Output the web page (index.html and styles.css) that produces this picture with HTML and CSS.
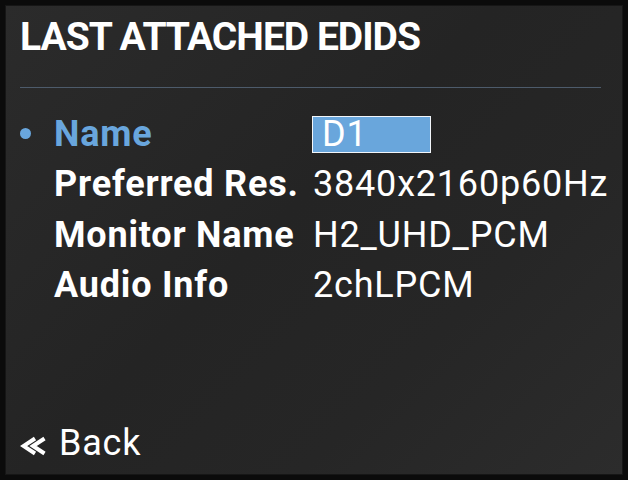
FILE: index.html
```html
<!DOCTYPE html>
<html>
<head>
<meta charset="utf-8">
<link rel="stylesheet" href="styles.css">
</head>
<body>
<div class="screen">
  <h1 class="title">LAST ATTACHED EDIDS</h1>
  <div class="rule"></div>
  <div class="rows">
    <div class="row active">
      <span class="bullet"></span>
      <span class="label">Name</span>
      <span class="value"><span class="field">D1</span></span>
    </div>
    <div class="row">
      <span class="bullet"></span>
      <span class="label">Preferred Res.</span>
      <span class="value">3840x2160p60Hz</span>
    </div>
    <div class="row">
      <span class="bullet"></span>
      <span class="label">Monitor Name</span>
      <span class="value">H2_UHD_PCM</span>
    </div>
    <div class="row">
      <span class="bullet"></span>
      <span class="label">Audio Info</span>
      <span class="value">2chLPCM</span>
    </div>
  </div>
  <div class="back">
    <svg class="chev" width="28" height="20" viewBox="0 0 28 20">
      <path d="M15 2.5 L3.5 10 L15 17.5 M24.5 2.5 L13 10 L24.5 17.5" fill="none" stroke="#fff" stroke-width="4"/>
    </svg>
    <span>Back</span>
  </div>
</div>
</body>
</html>
```
FILE: styles.css
```css
html, body {
  margin: 0;
  padding: 0;
  background: #060606;
}
.screen {
  box-sizing: border-box;
  width: 628px;
  height: 480px;
  border: 5px solid #0b0b0b;
  box-shadow: inset 0 0 0 1px #161616;
  background: linear-gradient(135deg, #2b2b2b 0%, #242424 45%, #262626 70%, #2c2c2c 100%);
  display: flex;
  flex-direction: column;
  font-family: Roboto, "Liberation Sans", sans-serif;
  color: #fff;
  padding: 0 22px 0 15px;
}
.title {
  margin: 10px 0 0 0;
  font-size: 39px;
  font-weight: 700;
  line-height: 44px;
  letter-spacing: -1px;
}
.rule {
  margin: 28px 0 0 0;
  height: 1px;
  background: #4d5b6b;
}
.rows {
  margin-top: 20.5px;
  display: flex;
  flex-direction: column;
}
.row {
  display: flex;
  align-items: center;
  height: 50.5px;
  font-size: 36px;
  letter-spacing: 0.8px;
  white-space: nowrap;
}
.bullet {
  flex: none;
  width: 11px;
  height: 11px;
  border-radius: 50%;
  margin: 0 23px 0 0;
  visibility: hidden;
  background: #69a6dd;
}
.row.active .bullet { visibility: visible; }
.label {
  flex: none;
  font-weight: 700;
  width: 259px;
}
.row.active .label { color: #69a6dd; }
.value {
  flex: none;
  font-weight: 400;
}
.field {
  display: inline-block;
  box-sizing: border-box;
  width: 119px;
  height: 37px;
  line-height: 35px;
  padding-left: 9px;
  background: #69a6dc;
  border: 1px solid #f2f6fa;
  margin-left: -1px;
}
.back {
  margin-top: auto;
  margin-bottom: 12px;
  display: flex;
  align-items: center;
  font-size: 36px;
  line-height: 40px;
  letter-spacing: 0.8px;
}
.chev {
  flex: none;
  margin: 5px 11px 0 0;
}
```
